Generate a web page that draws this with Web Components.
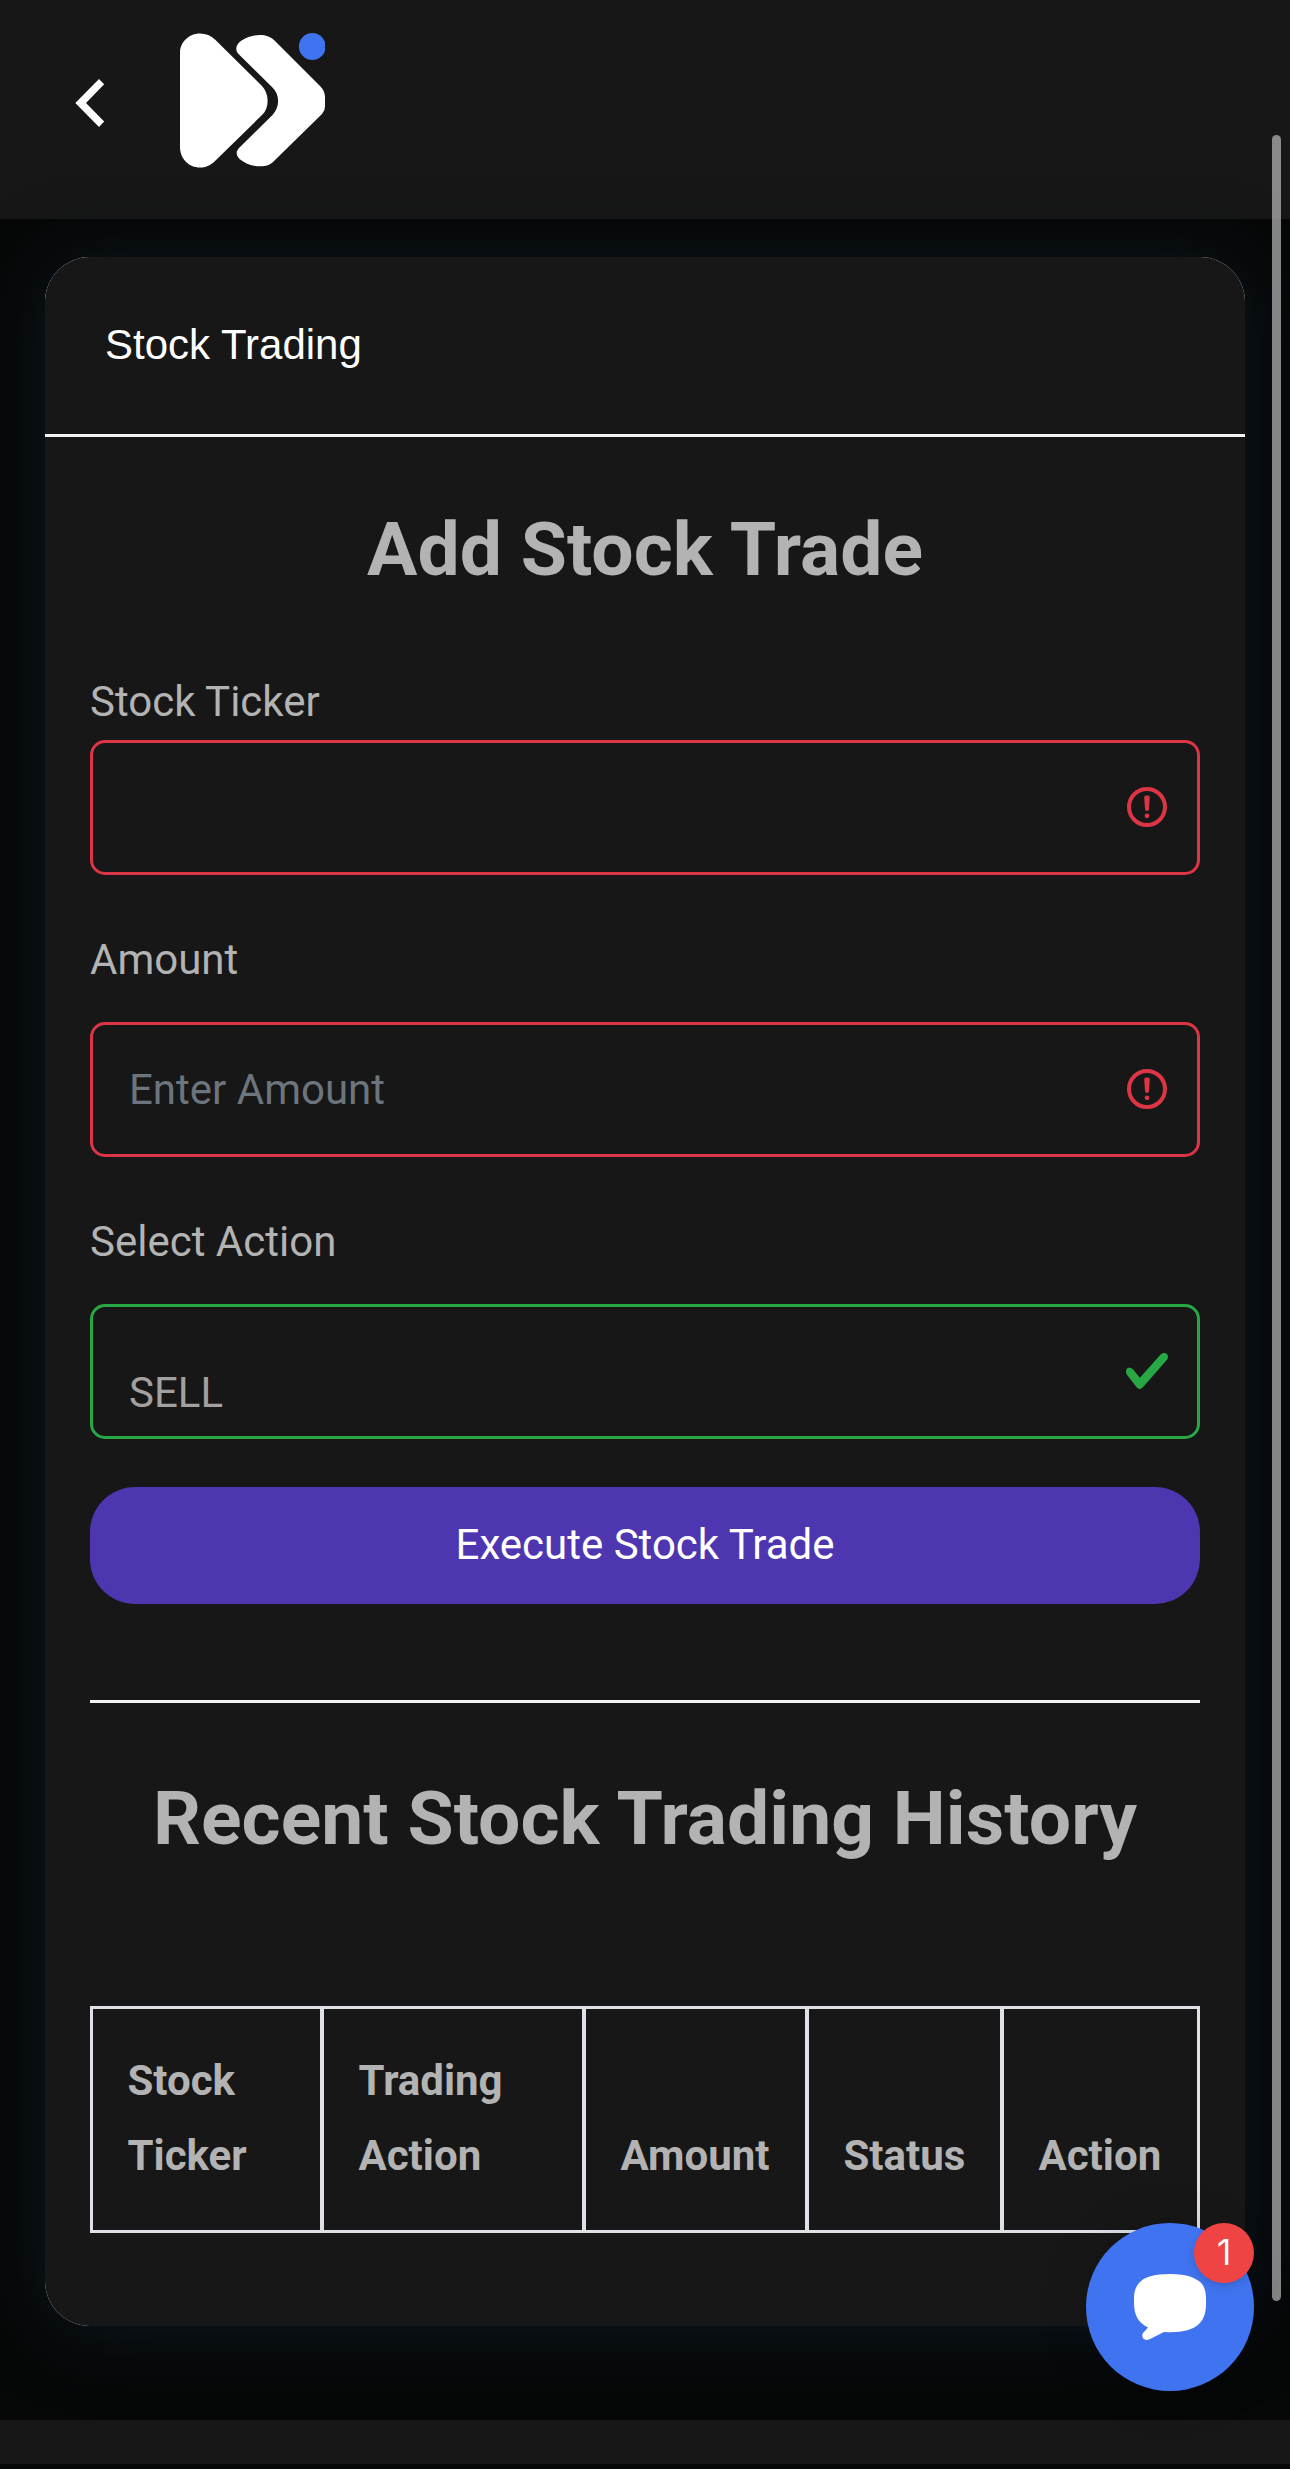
<!DOCTYPE html>
<html lang="en">
<head>
<meta charset="utf-8">
<title>Stock Trading</title>
<style>
  html, body{
    margin:0;
    height:2469px;
    overflow:hidden;
  }
  body{
    background-color:#060707;
    color:#b3b3b3;
    font-family:Roboto, sans-serif;
    font-size:42px;
    line-height:75px;
  }
</style>
</head>
<body>
<trading-app></trading-app>

<script>
class AppHeader extends HTMLElement{
  constructor(){
    super();
    this.attachShadow({mode:"open"}).innerHTML = `
      <style>
        :host{
          display:flex;
          align-items:flex-start;
          gap:75px;
          height:219px;
          padding-left:75px;
          box-sizing:border-box;
          background-color:#171717;
        }
        svg{
          display:block;
        }
        .back{
          margin-top:78px;
        }
        .logo{
          margin-top:32px;
        }
      </style>
      <svg class="back" width="30" height="50" viewBox="75 78 30 50">
        <path fill="#fff" d="M75.3 103 99 79l5.2 5.3L86 103l18.2 18.6L99 127z"/>
      </svg>
      <svg class="logo" width="145" height="137" viewBox="180 32 145 137">
        <path fill="#fff" d="M180 53C180 42 189 33.5 200 33.5C206 33.5 211 35.5 215 39.5L262 86C269.5 94 269.5 108 262 115L214 162C210 165.5 206 167.500 200 167.5C189 167.5 180 159 180 147Z"/>
        <path fill="#fff" d="M238.5 54C234.5 49.5 236 44 242 40.3C247 37 253 35 260 35C266 35 270 36.5 274 40L320 86Q325 91 325 97V106Q325 111.5 320 116L274 161C270 165 266 166.3 260 166.3C252 166.3 245 163.5 239.5 159Q234 153.5 239 148L272.5 115C280 107 280 95 272.5 87.5Z"/>
        <circle cx="312.3" cy="46.5" r="13.4" fill="#4073ef"/>
      </svg>
    `;
  }
}
customElements.define("app-header", AppHeader);

class TradingCard extends HTMLElement{
  constructor(){
    super();
    this.attachShadow({mode:"open"}).innerHTML = `
      <style>
        :host{
          display:flex;
          flex-direction:column;
          box-sizing:border-box;
          height:2069px;
          margin:38px 45px 94px;
          border-radius:45px;
          background-color:#fff;
          box-shadow:0 4px 75px 0 #0e1820;
        }
        header{
          box-sizing:border-box;
          height:180px;
          padding:0 60px 2px;
          display:flex;
          align-items:center;
          border-bottom:3px solid #f4f5f3;
          border-radius:45px 45px 0 0;
          background-color:#171717;
          color:#fff;
          font-family:"Liberation Sans", sans-serif;
        }
        .body{
          flex:1;
          padding:67px 45px 0;
          border-radius:0 0 45px 45px;
          background-color:#171717;
        }
      </style>
      <header><slot name="title"></slot></header>
      <div class="body"><slot></slot></div>
    `;
  }
}
customElements.define("trading-card", TradingCard);

class FormField extends HTMLElement{
  connectedCallback(){
    const valid = this.hasAttribute("valid");
    const color = valid ? "#28a745" : "#dc3545";
    const icon = valid
      ? `<svg width="48" height="48" viewBox="0 0 8 8">
          <path fill="#28a745" d="M2.3 6.73L.6 4.53c-.4-1.04.46-1.4 1.1-.8l1.1 1.4 3.4-3.8c.6-.63 1.6-.27 1.2.7l-4 4.6c-.43.5-.8.4-1.1.1z"/>
        </svg>`
      : `<svg width="48" height="48" viewBox="0 0 12 12" fill="none" stroke="#dc3545">
          <circle cx="6" cy="6" r="4.5"/>
          <path stroke-linejoin="round" d="M5.8 3.6h.4L6 6.5z"/>
          <circle cx="6" cy="8.2" r=".6" fill="#dc3545" stroke="none"/>
        </svg>`;
    this.attachShadow({mode:"open"}).innerHTML = `
      <style>
        :host{
          display:block;
        }
        .control{
          box-sizing:border-box;
          height:135px;
          margin-top:var(--label-gap, 25px);
          padding:0 26px 1px 36px;
          display:flex;
          align-items:center;
          justify-content:space-between;
          border:3px solid ${color};
          border-radius:15px;
        }
        .placeholder{
          color:#6c757d;
        }
        /* the select text hangs low in its box */
        .value{
          color:#a3a0a0;
          padding-top:42px;
          margin-bottom:0;
        }
        svg{
          display:block;
        }
      </style>
      <div>${this.getAttribute("label")}</div>
      <div class="control">
        ${this.hasAttribute("value")
          ? `<div class="value">${this.getAttribute("value")}</div>`
          : `<div class="placeholder">${this.getAttribute("placeholder") || ""}</div>`}
        ${icon}
      </div>
    `;
  }
}
customElements.define("form-field", FormField);

class PrimaryButton extends HTMLElement{
  constructor(){
    super();
    this.attachShadow({mode:"open"}).innerHTML = `
      <style>
        :host{
          display:block;
        }
        button{
          width:100%;
          height:117px;
          display:block;
          border:none;
          padding:0 0 2px;
          border-radius:45px;
          background-color:#4e36b1;
          color:#fff;
          font:inherit;
        }
      </style>
      <button><slot></slot></button>
    `;
  }
}
customElements.define("primary-button", PrimaryButton);

class HistoryTable extends HTMLElement{
  set columns(columns){
    this._columns = columns;
    this.render();
  }
  render(){
    const root = this.shadowRoot || this.attachShadow({mode:"open"});
    root.innerHTML = `
      <style>
        :host{
          display:block;
        }
        .row{
          box-sizing:border-box;
          height:227px;
          display:grid;
          grid-template-columns:231px 262px 223px 195px 1fr;
          border:3px solid #dee2e6;
          font-weight:700;
        }
        .cell{
          display:flex;
          align-items:flex-end;
          padding:0 0 37px 34.5px;
          border-right:4px solid #dee2e6;
        }
        .cell:last-child{
          border-right:none;
        }
      </style>
      <div class="row">
        ${this._columns.map((name) => `<div class="cell"><span>${name}</span></div>`).join("")}
      </div>
    `;
  }
}
customElements.define("history-table", HistoryTable);

class ChatLauncher extends HTMLElement{
  constructor(){
    super();
    this.attachShadow({mode:"open"}).innerHTML = `
      <style>
        :host{
          position:fixed;
          left:1086px;
          top:2223px;
          width:168px;
          height:168px;
          border-radius:50%;
          background-color:#4073ef;
          box-shadow:0 3px 50px rgba(0,0,0,.15);
        }
        svg{
          display:block;
        }
        .badge{
          position:absolute;
          top:0;
          right:0;
          width:60px;
          height:60px;
          border-radius:50%;
          background-color:#f04444;
          box-shadow:0 3px 9px rgba(0,0,0,.15);
          color:#fff;
          font:36px/59px Inter, sans-serif;
          text-align:center;
        }
      </style>
      <svg width="168" height="168" viewBox="0 0 168 168">
        <path fill="#fff" d="M84 51C101 51 111 55 116 61C120.500 67 120 74 120 80C120 88 119 95 113 101C106 107.500 94 110 78 109L63 116.500C58.500 118.500 54.500 114 57 110L62 104.500C53 100 48 93 48 80C48 71 48 66 53 60C58 54 68 51 84 51Z"/>
      </svg>
      <span class="badge"><slot></slot></span>
    `;
  }
}
customElements.define("chat-launcher", ChatLauncher);

class TradingApp extends HTMLElement{
  connectedCallback(){
    this.attachShadow({mode:"open"}).innerHTML = `
      <style>
        :host{
          display:flow-root;
          height:2469px;
        }
        h2{
          margin:0;
          font-size:75px;
          line-height:90px;
          font-weight:700;
          text-align:center;
          letter-spacing:.05px;
        }
        form-field{
          margin-top:47px;
        }
        form-field.ticker{
          --label-gap:1px;
          margin-top:70px;
        }
        primary-button{
          margin-top:48px;
        }
        hr{
          margin:96px 0 70px;
          border:none;
          height:3px;
          background-color:#f4f5f3;
        }
        history-table{
          margin-top:143px;
        }
        footer{
          height:44px;
          background-color:#171717;
        }
        .scrollbar{
          position:fixed;
          left:1272px;
          top:135px;
          width:9px;
          height:2166px;
          border-radius:5px;
          background-color:rgba(200,200,200,.65);
        }
      </style>
      <app-header></app-header>
      <trading-card>
        <span slot="title">Stock Trading</span>
        <h2>Add Stock Trade</h2>
        <form-field class="ticker" label="Stock Ticker"></form-field>
        <form-field label="Amount" placeholder="Enter Amount"></form-field>
        <form-field label="Select Action" value="SELL" valid></form-field>
        <primary-button>Execute Stock Trade</primary-button>
        <hr>
        <h2>Recent Stock Trading History</h2>
        <history-table></history-table>
      </trading-card>
      <footer></footer>
      <div class="scrollbar"></div>
      <chat-launcher>1</chat-launcher>
    `;
    this.shadowRoot.querySelector("history-table").columns = [
      "Stock<br>Ticker", "Trading<br>Action", "Amount", "Status", "Action"
    ];
  }
}
customElements.define("trading-app", TradingApp);
</script>
</body>
</html>
